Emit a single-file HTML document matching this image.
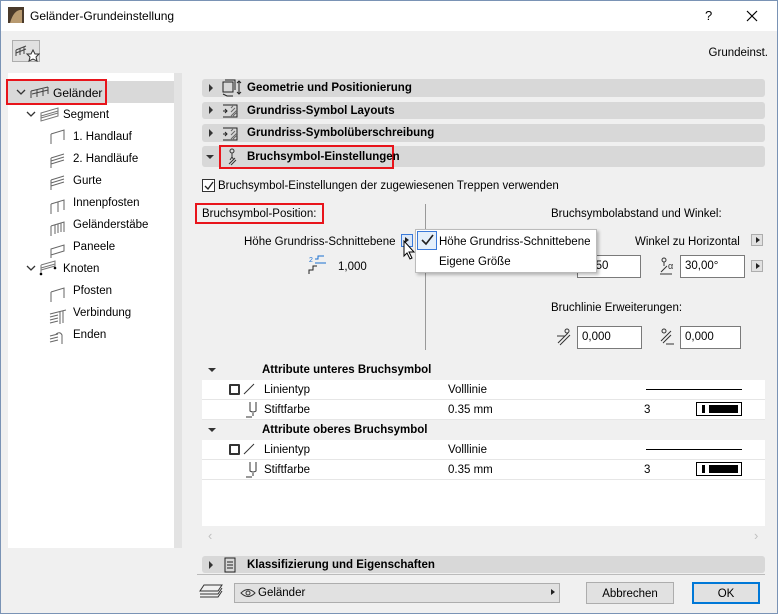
<!DOCTYPE html>
<html><head><meta charset="utf-8">
<style>
*{margin:0;padding:0;box-sizing:border-box}
body{width:778px;height:614px;overflow:hidden;font-family:"Liberation Sans",sans-serif;font-size:11.5px;color:#000;background:#f0f0f0;position:relative}
.a{position:absolute;white-space:nowrap}
.win{position:absolute;left:0;top:0;width:778px;height:614px;border:1px solid #7a93b5}
.title{position:absolute;left:1px;top:1px;width:776px;height:30px;background:#fff}
.hdr{position:absolute;left:202px;width:563px;background:#d8d8d8;border-radius:3px;font-weight:bold}
.tri{position:absolute;width:0;height:0;border-top:4px solid transparent;border-bottom:4px solid transparent;border-left:4px solid #333}
.trid{position:absolute;width:0;height:0;border-left:4px solid transparent;border-right:4px solid transparent;border-top:4px solid #333}
.red{position:absolute;border:2px solid #e8141b}
.inp{position:absolute;background:#fff;border:1px solid #7a7a7a;height:23px;padding:4px 0 0 4px}
.btn{position:absolute;border:1px solid #adadad;background:#e1e1e1;text-align:center;padding-top:4px;height:22px}
.sb{position:absolute;width:12px;height:12px;border:1px solid #adadad;background:#e1e1e1}
.sb:after{content:"";position:absolute;left:4px;top:2px;border-top:3px solid transparent;border-bottom:3px solid transparent;border-left:4px solid #222}
.row{position:absolute;left:202px;width:563px;height:20px;background:#fff;border-bottom:1px solid #e6e6e6}
</style></head><body>
<div class="win"></div>
<div class="title"></div>
<svg class="a" style="left:8px;top:7px" width="16" height="16"><rect width="16" height="16" fill="#4a3a2a"/><path d="M2 16 Q6 2 14 3 L14 16" fill="#b89a70"/></svg>
<div class="a" style="left:30px;top:9px;font-size:12px">Geländer-Grundeinstellung</div>
<div class="a" style="left:705px;top:8px;font-size:13px">?</div>
<svg class="a" style="left:746px;top:10px" width="12" height="12"><path d="M1 1L11 11M11 1L1 11" stroke="#000" stroke-width="1.2"/></svg>

<div class="a" style="left:12px;top:40px;width:28px;height:22px;border:1px solid #adadad;background:#e1e1e1"></div>
<svg class="a" style="left:14px;top:42px" width="26" height="20"><path d="M2 8 L12 4 M2 8 L2 14 M6 6 L6 13 M10 5 L10 12 M2 11 L12 7" stroke="#444" fill="none"/><path d="M19 8 L21 12 L25 12 L22 15 L23 19 L19 17 L15 19 L16 15 L13 12 L17 12Z" fill="#fff" stroke="#333"/></svg>
<div class="a" style="right:10px;top:47px">Grundeinst.</div>

<!-- left tree -->
<div class="a" style="left:8px;top:73px;width:166px;height:475px;background:#fff"></div>
<div class="a" style="left:174px;top:73px;width:8px;height:475px;background:#e3e3e3"></div>
<div class="a" style="left:8px;top:81px;width:166px;height:22px;background:#d9d9d9"></div>
<div class="red" style="left:6px;top:79px;width:101px;height:26px"></div>
<svg class="a" style="left:16px;top:88px" width="10" height="8"><path d="M1 2L5 6L9 2" stroke="#333" fill="none" stroke-width="1.3"/></svg>
<svg class="a" style="left:30px;top:85px" width="20" height="14"><path d="M1 6L18 2M1 6V13M7 5V12M13 4V11M18 2V9M2 9L18 5" stroke="#444" fill="none"/></svg>
<div class="a" style="left:53px;top:86px;font-size:12px">Geländer</div>
<svg class="a" style="left:26px;top:110px" width="10" height="8"><path d="M1 2L5 6L9 2" stroke="#333" fill="none" stroke-width="1.3"/></svg>
<svg class="a" style="left:40px;top:106px" width="20" height="16"><path d="M1 7L18 2V10L1 15Z M1 10L18 5M1 12L18 7" stroke="#777" fill="none"/></svg>
<div class="a" style="left:63px;top:109px">Segment</div>
<div class="a" style="left:73px;top:131px">1. Handlauf</div>
<div class="a" style="left:73px;top:153px">2. Handläufe</div>
<div class="a" style="left:73px;top:175px">Gurte</div>
<div class="a" style="left:73px;top:197px">Innenpfosten</div>
<div class="a" style="left:73px;top:219px">Geländerstäbe</div>
<div class="a" style="left:73px;top:241px">Paneele</div>
<svg class="a" style="left:26px;top:264px" width="10" height="8"><path d="M1 2L5 6L9 2" stroke="#333" fill="none" stroke-width="1.3"/></svg>
<svg class="a" style="left:38px;top:259px" width="20" height="18"><path d="M3 6L17 2V9M3 6V15M3 9L17 5M3 11L17 7" stroke="#777" fill="none"/><circle cx="3" cy="15" r="1.3"/><circle cx="17" cy="9" r="1.3"/></svg>
<div class="a" style="left:63px;top:263px">Knoten</div>
<div class="a" style="left:73px;top:285px">Pfosten</div>
<div class="a" style="left:73px;top:307px">Verbindung</div>
<div class="a" style="left:73px;top:329px">Enden</div>
<svg class="a" style="left:48px;top:126px" width="20" height="220" stroke="#666" fill="none">
<path d="M3 8L16 4V14M3 8V18"/>
<path d="M3 32L16 28M3 35L16 31M3 38L16 34M3 32V42"/>
<path d="M3 54L16 50M3 57L16 53M3 60L16 56M3 54V64"/>
<path d="M3 78L16 74V84M3 78V88M10 76V86"/>
<path d="M3 100L16 96V106M3 100V110M7 99V108M10 98V107M13 97V106"/>
<path d="M3 123L16 119V125L3 129Z M3 123V132"/>
<path d="M3 166L16 162V172M3 166V176"/>
<path d="M2 188L10 186M2 191L10 189M2 194L10 192M2 197L10 195M10 186L18 184M12 186V198M15 185V197"/>
<path d="M2 210L10 208M2 213L10 211M2 216L10 214M8 208Q12 205 14 209V218"/>
</svg>

<!-- headers -->
<div class="hdr" style="top:79px;height:18px"></div>
<div class="tri" style="left:209px;top:84px"></div>
<svg class="a" style="left:221px;top:79px" width="22" height="18" stroke="#222" fill="none"><rect x="2" y="3" width="10" height="10"/><path d="M4 1H14V11M2 15L6 17H12M18 2V15M16 4L18 2L20 4M16 13L18 15L20 13"/></svg>
<div class="a" style="left:247px;top:82px;font-weight:bold">Geometrie und Positionierung</div>
<div class="hdr" style="top:102px;height:17px"></div>
<div class="tri" style="left:209px;top:106px"></div>
<svg class="a" style="left:221px;top:102px" width="22" height="17" stroke="#222" fill="none"><path d="M2 3H16V15H2M2 9H6M4 7L6 9L4 11"/><path d="M10 14L16 8M12 14L16 10M10 10L14 6M10 6L12 4" stroke="#666"/></svg>
<div class="a" style="left:247px;top:105px;font-weight:bold">Grundriss-Symbol Layouts</div>
<div class="hdr" style="top:124px;height:18px"></div>
<div class="tri" style="left:209px;top:129px"></div>
<svg class="a" style="left:221px;top:125px" width="22" height="17" stroke="#222" fill="none"><path d="M2 3H16V15H2M2 9H6M4 7L6 9L4 11"/><path d="M10 14L16 8M12 14L16 10M10 10L14 6M10 6L12 4" stroke="#666"/></svg>
<div class="a" style="left:247px;top:127px;font-weight:bold">Grundriss-Symbolüberschreibung</div>
<div class="hdr" style="top:146px;height:21px"></div>
<div class="trid" style="left:206px;top:155px"></div>
<div class="red" style="left:219px;top:145px;width:175px;height:24px"></div>
<svg class="a" style="left:226px;top:148px" width="12" height="18" stroke="#333" fill="none"><circle cx="6" cy="3" r="2"/><path d="M6 5V9L4 12M6 9L8 12M3 16L9 10M5 17L10 12"/></svg>
<div class="a" style="left:247px;top:151px;font-weight:bold">Bruchsymbol-Einstellungen</div>

<!-- checkbox -->
<div class="a" style="left:202px;top:179px;width:13px;height:13px;border:1px solid #333;background:#fff"></div>
<svg class="a" style="left:203px;top:180px" width="12" height="12"><path d="M2 6L5 9L10 2" stroke="#222" fill="none" stroke-width="1.3"/></svg>
<div class="a" style="left:218px;top:180px">Bruchsymbol-Einstellungen der zugewiesenen Treppen verwenden</div>

<div class="red" style="left:195px;top:203px;width:129px;height:21px"></div>
<div class="a" style="left:202px;top:208px">Bruchsymbol-Position:</div>
<div class="a" style="left:425px;top:204px;width:1px;height:146px;background:#999"></div>
<div class="a" style="left:244px;top:236px">Höhe Grundriss-Schnittebene</div>
<div class="a" style="left:401px;top:234px;width:12px;height:13px;border:1px solid #3b7ad9;background:#dbe7f7"></div>
<div class="a" style="left:405px;top:237px;border-top:3px solid transparent;border-bottom:3px solid transparent;border-left:4px solid #222"></div>
<svg class="a" style="left:403px;top:240px" width="14" height="22"><path d="M1 1V16L4 13L7 19L9 18L6 12H11Z" fill="#fff" stroke="#000"/></svg>
<svg class="a" style="left:307px;top:255px" width="20" height="20"><text x="2" y="7" font-size="7" fill="#1a6fd1" font-family="Liberation Sans">2</text><path d="M8 4H11V1H17M8 8H19" stroke="#1a6fd1" fill="none"/><path d="M2 19V15H6V11H10" stroke="#222" fill="none"/></svg>
<div class="a" style="left:338px;top:261px">1,000</div>

<!-- right side -->
<div class="a" style="left:551px;top:208px">Bruchsymbolabstand und Winkel:</div>
<div class="a" style="left:635px;top:236px">Winkel zu Horizontal</div>
<div class="sb" style="left:751px;top:234px"></div>
<div class="a" style="left:557px;top:262px;color:#555">≠</div>
<div class="inp" style="left:577px;top:255px;width:64px;padding-left:8px">0,50</div>
<svg class="a" style="left:658px;top:257px" width="20" height="20" stroke="#333" fill="none"><circle cx="6" cy="3" r="2"/><path d="M6 5V9M3 15L9 9M2 17H14"/><text x="10" y="12" font-size="9" stroke="none" fill="#333">α</text></svg>
<div class="inp" style="left:680px;top:255px;width:65px">30,00°</div>
<div class="sb" style="left:751px;top:260px"></div>
<div class="a" style="left:551px;top:302px">Bruchlinie Erweiterungen:</div>
<svg class="a" style="left:555px;top:328px" width="18" height="20" stroke="#333" fill="none"><circle cx="12" cy="3" r="2"/><path d="M2 8H10M3 15L13 5M5 17L15 7"/></svg>
<div class="inp" style="left:577px;top:326px;width:65px">0,000</div>
<svg class="a" style="left:658px;top:328px" width="18" height="20" stroke="#333" fill="none"><circle cx="6" cy="3" r="2"/><path d="M8 16H16M3 13L13 3M5 15L13 7"/></svg>
<div class="inp" style="left:680px;top:326px;width:61px">0,000</div>

<!-- popup -->
<div class="a" style="left:415px;top:229px;width:182px;height:44px;background:#fff;border:1px solid #bbb;box-shadow:2px 2px 3px rgba(0,0,0,.25)"></div>
<div class="a" style="left:417px;top:231px;width:20px;height:19px;border:1px solid #3b7ad9;background:#e5f0fb"></div>
<svg class="a" style="left:420px;top:233px" width="15" height="14"><path d="M2 7L6 11L13 2" stroke="#222" fill="none" stroke-width="1.6"/></svg>
<div class="a" style="left:439px;top:236px">Höhe Grundriss-Schnittebene</div>
<div class="a" style="left:439px;top:256px">Eigene Größe</div>

<!-- attribute table -->
<div class="a" style="left:202px;top:360px;width:563px;height:166px;background:#fff"></div>
<div class="a" style="left:202px;top:360px;width:563px;height:20px;background:#f0f0f0"></div>
<div class="trid" style="left:208px;top:368px"></div>
<div class="a" style="left:262px;top:364px;font-weight:bold">Attribute unteres Bruchsymbol</div>
<div class="row" style="top:380px"></div>
<div class="a" style="left:229px;top:384px;width:11px;height:11px;border:2px solid #333;border-radius:1px"></div>
<svg class="a" style="left:243px;top:383px" width="12" height="12"><path d="M1 11L11 1" stroke="#333"/></svg>
<div class="a" style="left:264px;top:384px">Linientyp</div>
<div class="a" style="left:448px;top:384px">Volllinie</div>
<div class="a" style="left:646px;top:389px;width:96px;height:1px;background:#000"></div>
<div class="row" style="top:400px"></div>
<svg class="a" style="left:244px;top:401px" width="14" height="18" stroke="#333" fill="none"><path d="M6 1V10Q9 12 12 10V1M2 16H8M9 12L9 15"/></svg>
<div class="a" style="left:264px;top:404px">Stiftfarbe</div>
<div class="a" style="left:448px;top:404px">0.35 mm</div>
<div class="a" style="left:644px;top:404px">3</div>
<div class="a" style="left:696px;top:402px;width:46px;height:14px;border:1px solid #000"><div style="position:absolute;left:5px;top:2px;width:3px;height:8px;background:#000"></div><div style="position:absolute;left:12px;top:2px;width:29px;height:8px;background:#000"></div></div>
<div class="a" style="left:202px;top:420px;width:563px;height:20px;background:#f0f0f0"></div>
<div class="trid" style="left:208px;top:428px"></div>
<div class="a" style="left:262px;top:424px;font-weight:bold">Attribute oberes Bruchsymbol</div>
<div class="row" style="top:440px"></div>
<div class="a" style="left:229px;top:444px;width:11px;height:11px;border:2px solid #333;border-radius:1px"></div>
<svg class="a" style="left:243px;top:443px" width="12" height="12"><path d="M1 11L11 1" stroke="#333"/></svg>
<div class="a" style="left:264px;top:444px">Linientyp</div>
<div class="a" style="left:448px;top:444px">Volllinie</div>
<div class="a" style="left:646px;top:449px;width:96px;height:1px;background:#000"></div>
<div class="row" style="top:460px"></div>
<svg class="a" style="left:244px;top:461px" width="14" height="18" stroke="#333" fill="none"><path d="M6 1V10Q9 12 12 10V1M2 16H8M9 12L9 15"/></svg>
<div class="a" style="left:264px;top:464px">Stiftfarbe</div>
<div class="a" style="left:448px;top:464px">0.35 mm</div>
<div class="a" style="left:644px;top:464px">3</div>
<div class="a" style="left:696px;top:462px;width:46px;height:14px;border:1px solid #000"><div style="position:absolute;left:5px;top:2px;width:3px;height:8px;background:#000"></div><div style="position:absolute;left:12px;top:2px;width:29px;height:8px;background:#000"></div></div>
<div class="a" style="left:208px;top:528px;color:#c0c0c0;font-size:13px">‹</div>
<div class="a" style="left:754px;top:528px;color:#c0c0c0;font-size:13px">›</div>

<div class="hdr" style="top:556px;height:17px"></div>
<div class="tri" style="left:209px;top:561px"></div>
<svg class="a" style="left:224px;top:557px" width="12" height="16" stroke="#222" fill="none"><rect x="1" y="1" width="10" height="14"/><path d="M3 5H9M3 8H9M3 11H9"/></svg>
<div class="a" style="left:247px;top:559px;font-weight:bold">Klassifizierung und Eigenschaften</div>

<div class="a" style="left:197px;top:574px;width:568px;height:1px;background:#bbb"></div>
<svg class="a" style="left:198px;top:583px" width="26" height="18" stroke="#333" fill="none"><path d="M6 2H24L20 8H2Z M2 11H20L24 5 M2 14H20L24 8"/></svg>
<div class="a" style="left:234px;top:583px;width:326px;height:20px;border:1px solid #adadad;background:#e1e1e1"></div>
<svg class="a" style="left:240px;top:587px" width="16" height="12" stroke="#333" fill="none"><path d="M1 6Q8 -1 15 6Q8 13 1 6Z"/><circle cx="8" cy="6" r="2"/></svg>
<div class="a" style="left:258px;top:587px">Geländer</div>
<div class="a" style="left:551px;top:589px;border-top:3px solid transparent;border-bottom:3px solid transparent;border-left:4px solid #222"></div>
<div class="btn" style="left:586px;top:582px;width:88px;padding-top:5px">Abbrechen</div>
<div class="btn" style="left:692px;top:582px;width:68px;border:2px solid #0078d7;padding-top:4px">OK</div>
</body></html>
